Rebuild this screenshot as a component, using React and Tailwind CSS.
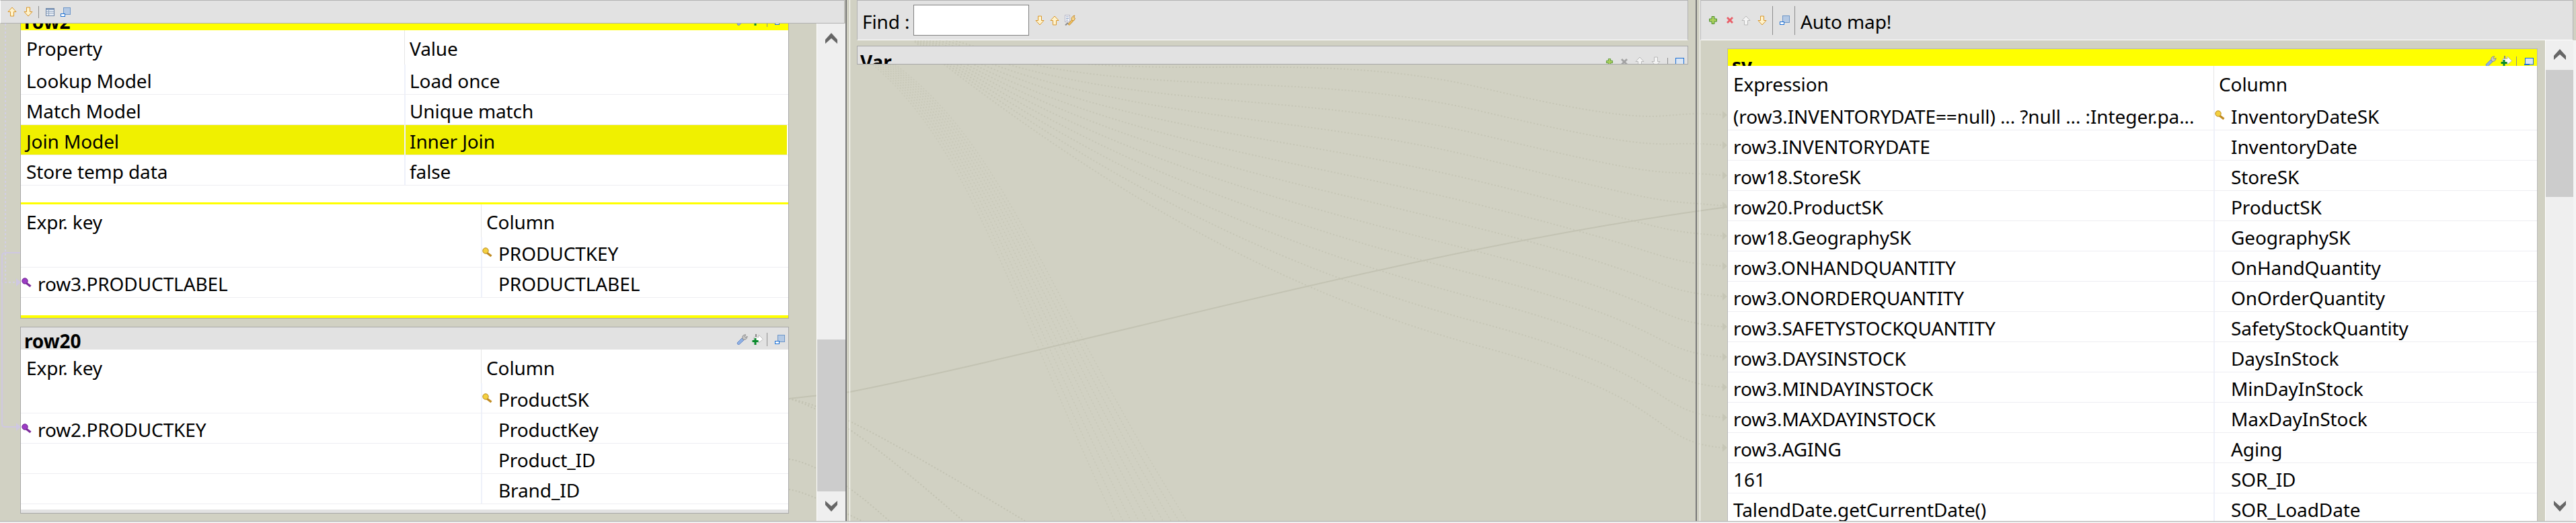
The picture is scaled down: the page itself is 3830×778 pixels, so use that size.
const ArrowUp = ({ off }) => (
  <svg width="14" height="15" viewBox="0 0 14 15" className="shrink-0">
    <path d="M7 1 L13 7.5 H9.5 V14 H4.5 V7.5 H1 Z" fill={off ? '#f4f4f4' : '#fff3cc'} stroke={off ? '#b9b9b9' : '#d9962a'} />
  </svg>
);

const ArrowDown = ({ off }) => (
  <svg width="14" height="15" viewBox="0 0 14 15" className="shrink-0">
    <path d="M7 14 L13 7.5 H9.5 V1 H4.5 V7.5 H1 Z" fill={off ? '#f4f4f4' : '#fff3cc'} stroke={off ? '#b9b9b9' : '#d9962a'} />
  </svg>
);

const WindowIcon = () => (
  <svg width="15" height="14" viewBox="0 0 15 14" className="shrink-0">
    <rect x="4.5" y="0.5" width="10" height="10" fill="#b4c9e4" stroke="#6f97c8" />
    <rect x="0.5" y="9.5" width="6" height="4" fill="#fff" stroke="#1a6fd4" />
  </svg>
);

const MaxIcon = () => (
  <svg width="14" height="11" viewBox="0 0 14 11" className="shrink-0">
    <rect x="1.5" y="0.5" width="12" height="9.5" fill="#dbe6f4" stroke="#1a6fd4" />
    <rect x="0" y="9" width="8" height="2" fill="#1a6fd4" />
  </svg>
);

const TableIcon = () => (
  <svg width="13" height="12" viewBox="0 0 13 12" className="shrink-0">
    <rect x="0.5" y="0.5" width="12" height="11" fill="#eef2f8" stroke="#6d85a6" />
    <rect x="1" y="1" width="11" height="2" fill="#8ba3c4" />
    <path d="M1 5.5 H12 M1 8 H12 M4.5 3 V11" stroke="#8fa3bd" />
  </svg>
);

const PlusIcon = ({ small }) => (
  <svg width="12" height={small ? 10 : 12} viewBox="0 0 12 12" className="shrink-0">
    <path d="M4 0.5 H8 V4 H11.5 V8 H8 V11.5 H4 V8 H0.5 V4 H4 Z" fill="#a9cf5c" stroke="#4f9130" />
  </svg>
);

const CrossIcon = ({ off }) => (
  <svg width="12" height="12" viewBox="0 0 12 12" className="shrink-0">
    <path d="M1 3 L3 1 L6 4 L9 1 L11 3 L8 6 L11 9 L9 11 L6 8 L3 11 L1 9 L4 6 Z" fill={off ? '#a3a3a3' : '#e9606a'} />
  </svg>
);

const WrenchIcon = () => (
  <svg width="17" height="16" viewBox="0 0 17 16" className="shrink-0">
    <path d="M1 13 L8 6 L11 9 L4 15.5 Q1 16 1 13 Z" fill="#8fb0e4" stroke="#6f8fc8" />
    <path d="M9 7 Q8 2 12 1 L14 1 L12 3.5 L14 5 L16 3 Q16 8 11 8.5 Z" fill="#c8c8c8" stroke="#8a8a8a" />
  </svg>
);

const ArrowPlusIcon = () => (
  <svg width="17" height="16" viewBox="0 0 17 16" className="shrink-0">
    <rect x="5" y="0" width="2" height="6" fill="#888" />
    <path d="M3 4.5 H10 V1 L16.5 7.5 L10 13 V10 H3 Z" fill="#fff" stroke="#bbb" />
    <path d="M3.5 6 H6.5 V9 H9.5 V12 H6.5 V16 H3.5 V12 H0.5 V9 H3.5 Z" fill="#0a8a2c" />
  </svg>
);

const FindIcon = () => (
  <svg width="16" height="16" viewBox="0 0 16 16" className="shrink-0">
    <rect x="0.5" y="0.5" width="7" height="10" fill="#f4f4f4" stroke="#b8b8c8" />
    <path d="M2 3 H6 M2 5.5 H6 M2 8 H5" stroke="#8aa0c8" />
    <path d="M5 14 L11 7 L13 9 L7 15.5 Z" fill="#f0c060" stroke="#c89030" />
    <path d="M10 7 Q10 2 15 1 L13.5 4 L15.5 5 Q15 9 12 9 Z" fill="#f6d690" stroke="#c89030" />
    <path d="M1 15.5 L5 12" stroke="#888" strokeWidth="2" />
  </svg>
);

const KeyIcon = ({ purple }) => (
  <svg width="15" height="15" viewBox="0 0 15 15" className="shrink-0 -mt-[4px]">
    <path d="M7 8 L13.5 13" stroke={purple ? '#7c2a9c' : '#c08a20'} strokeWidth="3.4" />
    <circle cx="5" cy="5" r="4.2" fill={purple ? '#9c3cc4' : '#f4d040'} stroke={purple ? '#6c2390' : '#b88a20'} />
  </svg>
);

const Chevron = ({ down }) => (
  <svg width="18" height="16" viewBox="0 0 18 16" className={down ? 'rotate-180 shrink-0' : 'shrink-0'}>
    <path d="M9 0 L18 10 V16 L9 8 L0 16 V10 Z" fill="#666666" />
  </svg>
);

const Sep = ({ className }) => <div className={`w-px bg-[#8e8e8e] shrink-0 ${className}`} />;

const Text = ({ children, className = '' }) => (
  <span className={`whitespace-nowrap text-black ${className}`}>{children}</span>
);

// one table row, widths come from the parent table
const Row = ({ left, right, leftW, leftKey, rightKey, selected }) => (
  <div className="flex h-[45px] shrink-0 border-b border-[#eeeef2] pr-[2px]">
    <div className={`${leftW} shrink-0 flex items-center pt-[4px] ${selected ? 'bg-[#f0f000]' : ''} ${leftKey ? 'pl-[1px]' : 'pl-2'}`}>
      {leftKey && <KeyIcon purple />}
      <Text className={leftKey ? 'ml-[9px]' : ''}>{left}</Text>
    </div>
    <div className="w-[2px] shrink-0 bg-[#eef1fa]" />
    <div className={`flex-1 flex items-center pt-[4px] ${selected ? 'bg-[#f0f000]' : ''} ${rightKey ? 'pl-[0px]' : right && leftKey !== undefined ? 'pl-[24px]' : 'pl-[6px]'}`}>
      {rightKey && <KeyIcon />}
      <Text className={rightKey ? 'ml-[9px]' : ''}>{right}</Text>
    </div>
  </div>
);

const Head = ({ left, right, leftW, className = '' }) => (
  <div className={`flex shrink-0 ${className}`}>
    <div className={`${leftW} shrink-0 flex items-center pl-2 pt-[3px]`}>
      <Text>{left}</Text>
    </div>
    <div className="w-px shrink-0 bg-[#e6e6e6]" />
    <div className="flex-1 flex items-center pl-[7px] pt-[3px]">
      <Text>{right}</Text>
    </div>
  </div>
);

const TableActions = () => (
  <div className="flex items-center mt-[3px]">
    <WrenchIcon />
    <div className="ml-[6px]"><ArrowPlusIcon /></div>
    <Sep className="h-[20px] ml-[5px]" />
    <div className="ml-[11px]"><WindowIcon /></div>
  </div>
);

const rightRows = [
  ['(row3.INVENTORYDATE==null) ... ?null ... :Integer.pa...', 'InventoryDateSK', true],
  ['row3.INVENTORYDATE', 'InventoryDate'],
  ['row18.StoreSK', 'StoreSK'],
  ['row20.ProductSK', 'ProductSK'],
  ['row18.GeographySK', 'GeographySK'],
  ['row3.ONHANDQUANTITY', 'OnHandQuantity'],
  ['row3.ONORDERQUANTITY', 'OnOrderQuantity'],
  ['row3.SAFETYSTOCKQUANTITY', 'SafetyStockQuantity'],
  ['row3.DAYSINSTOCK', 'DaysInStock'],
  ['row3.MINDAYINSTOCK', 'MinDayInStock'],
  ['row3.MAXDAYINSTOCK', 'MaxDayInStock'],
  ['row3.AGING', 'Aging'],
  ['161', 'SOR_ID'],
  ['TalendDate.getCurrentDate()', 'SOR_LoadDate'],
];

// mapping links that run behind the panels
const Links = () => {
  const targets = Array.from({ length: 12 }, (_, k) => 171 + 45 * k);
  return (
    <svg width="3830" height="778" className="absolute inset-0" fill="none">
      {targets.map((y, k) => (
        <g key={y}>
          <path
            d={`M1360 ${40 + k * 2} C1640 ${150 + k * 12}, 1900 ${60 + 34 * k}, 2200 ${130 + 35 * k} S2450 ${y - 10}, 2561 ${y}`}
            stroke="#c6c6b6"
            strokeWidth="2"
            strokeDasharray="2 3"
          />
          <path d={`M2561 ${y - 6} L2568 ${y} L2561 ${y + 6} Z`} fill="#c6c6b6" />
        </g>
      ))}
      {[0, 6, 12, 18, 24, 30, 36, 42, 48, 54].map((d) => (
        <path
          key={d}
          d={`M${1290 + d * 0.6} 90 C${1440 + d} 210, ${1500 + d} 440, ${1660 + d * 2} 780`}
          stroke="#c8c8b8"
          strokeWidth="1.5"
          strokeDasharray="2 3"
        />
      ))}
      <path d="M1173 593 C1214 601, 1264 618, 1524 775" stroke="#c2c2b2" strokeWidth="2" strokeDasharray="2 3" />
      <path d="M1173 593 C1214 605, 1270 632, 1432 775" stroke="#c2c2b2" strokeWidth="2" strokeDasharray="2 3" />
      <path d="M1173 683 C1214 690, 1264 722, 1322 775" stroke="#c2c2b2" strokeWidth="2" strokeDasharray="2 3" />
      <path d="M1173 728 C1214 735, 1264 770, 1290 778" stroke="#c2c2b2" strokeWidth="2" strokeDasharray="2 3" />
      <path d="M1173 593 L1264 583 C1640 507, 2100 370, 2568 308" stroke="#c3c3b3" strokeWidth="2" />
      {/* join links in the left gutter */}
      <path d="M8 35 V420 H24" stroke="#d2cfe6" strokeWidth="2" strokeDasharray="3 3" />
      <path d="M30 376 H8 Q3 376 3 381 V630 Q3 635 8 635 H24" stroke="#cfc8e2" strokeWidth="2" />
      <path d="M24 414 L31 420 L24 426 Z" fill="#cfc8e2" />
      <path d="M24 629 L31 635 L24 641 Z" fill="#cfc8e2" />
    </svg>
  );
};

export default function App() {
  return (
    <div className="relative w-[3830px] h-[778px] overflow-hidden bg-[#d1d1c3] font-['Noto_Sans',sans-serif] text-[28px] leading-none tracking-[-0.1px]">
      <Links />
      <div className="relative flex flex-col h-full">
        <div className="flex h-[775px]">
          {/* left column */}
          <div className="w-[1257px] shrink-0 flex flex-col">
            <div className="h-[35px] shrink-0 flex items-center bg-[#e2e2e2] border border-[#b2b2b2] border-l-white mr-px pl-[10px]">
              <ArrowUp />
              <div className="ml-[10px]"><ArrowDown /></div>
              <Sep className="h-[18px] ml-[8px]" />
              <div className="ml-[10px]"><TableIcon /></div>
              <div className="ml-[9px]"><WindowIcon /></div>
            </div>
            <div className="flex flex-1 min-h-0">
              <div className="w-[30px] shrink-0" />
              <div className="w-[1143px] shrink-0 flex flex-col">
                <div className="h-[439px] shrink-0 flex flex-col bg-white border-x border-b border-[#a8a8a8]">
                  <div className="h-[10px] shrink-0 overflow-hidden bg-[#ffff00] flex flex-col justify-end">
                    <div className="h-[33px] shrink-0 flex items-center justify-between pl-[5px] pr-[5px]">
                      <Text className="font-bold mt-[7px]">row2</Text>
                      <TableActions />
                    </div>
                  </div>
                  <Head left="Property" right="Value" leftW="w-[570px]" className="h-[51px]" />
                  <Row leftW="w-[570px]" left="Lookup Model" right="Load once" />
                  <Row leftW="w-[570px]" left="Match Model" right="Unique match" />
                  <Row leftW="w-[570px]" left="Join Model" right="Inner Join" selected />
                  <Row leftW="w-[570px]" left="Store temp data" right="false" />
                  <div className="h-[25px] shrink-0" />
                  <div className="h-[3px] shrink-0 bg-[#ffff00]" />
                  <Head left="Expr. key" right="Column" leftW="w-[684px]" className="h-[49px]" />
                  <Row leftW="w-[684px]" left="" right="PRODUCTKEY" rightKey />
                  <Row leftW="w-[684px]" left="row3.PRODUCTLABEL" right="PRODUCTLABEL" leftKey />
                  <div className="h-[26px] shrink-0" />
                  <div className="h-[4px] shrink-0 bg-[#ffff00]" />
                </div>
                <div className="h-[278px] shrink-0 mt-[12px] flex flex-col bg-white border border-[#a8a8a8]">
                  <div className="h-[33px] shrink-0 flex items-center justify-between bg-[#e2e2e2] pl-[5px] pr-[5px]">
                    <Text className="font-bold mt-[7px]">row20</Text>
                    <TableActions />
                  </div>
                  <Head left="Expr. key" right="Column" leftW="w-[684px]" className="h-[50px]" />
                  <Row leftW="w-[684px]" left="" right="ProductSK" rightKey />
                  <Row leftW="w-[684px]" left="row2.PRODUCTKEY" right="ProductKey" leftKey />
                  <Row leftW="w-[684px]" left="" right="Product_ID" leftKey={false} />
                  <Row leftW="w-[684px]" left="" right="Brand_ID" leftKey={false} />
                  <div className="h-[8px] shrink-0" />
                  <div className="h-[5px] shrink-0 bg-[#e2e2e2]" />
                </div>
              </div>
              <div className="w-[41px] shrink-0" />
              <div className="w-[43px] shrink-0 flex flex-col items-center bg-[#efefef] border-l border-white pt-[14px] pb-[14px]">
                <Chevron />
                <div className="w-full h-[226px] shrink-0 bg-[#cccccc] mt-[440px]" />
                <div className="mt-auto"><Chevron down /></div>
              </div>
            </div>
          </div>
          {/* sash */}
          <div className="w-[7px] shrink-0 flex">
            <div className="w-[2px] bg-[#777777]" />
            <div className="flex-1" />
            <div className="w-px bg-white" />
          </div>
          {/* middle column */}
          <div className="w-[1257px] shrink-0 flex flex-col pl-[10px] pr-[11px]">
            <div className="h-[60px] shrink-0 flex items-center bg-[#e2e2e2] border border-[#b2b2b2] border-b-white pl-[7px]">
              <Text className="w-[76px] mt-[3px]">Find :</Text>
              <div className="w-[172px] h-[46px] bg-white border border-[#808080]" />
              <div className="ml-[9px] flex items-center gap-[8px]">
                <ArrowDown />
                <ArrowUp />
                <FindIcon />
              </div>
            </div>
            <div className="h-[28px] shrink-0 mt-[8px] overflow-hidden flex items-start justify-between bg-[#e2e2e2] border border-[#a8a8a8] pl-[4px] pr-[5px]">
              <Text className="font-bold mt-[9px]">Var</Text>
              <div className="flex items-center gap-[10px] mt-[15px]">
                <PlusIcon small />
                <CrossIcon off />
                <ArrowUp off />
                <ArrowDown off />
                <Sep className="h-[12px]" />
                <MaxIcon />
              </div>
            </div>
          </div>
          {/* sash */}
          <div className="w-[7px] shrink-0 flex">
            <div className="w-[2px] bg-[#777777]" />
            <div className="flex-1" />
            <div className="w-px bg-white" />
          </div>
          {/* right column */}
          <div className="flex-1 min-w-0 flex flex-col">
            <div className="h-[60px] shrink-0 flex items-start bg-[#e2e2e2] border border-[#b2b2b2] border-b-white mr-[4px] pl-[12px]">
              <div className="mt-[23px]"><PlusIcon /></div>
              <div className="mt-[23px] ml-[13px]"><CrossIcon /></div>
              <div className="mt-[22px] ml-[11px]"><ArrowUp off /></div>
              <div className="mt-[22px] ml-[10px]"><ArrowDown /></div>
              <Sep className="h-[43px] mt-[8px] ml-[8px]" />
              <div className="mt-[22px] ml-[10px]"><WindowIcon /></div>
              <Sep className="h-[43px] mt-[8px] ml-[7px]" />
              <Text className="ml-[8px] mt-[17px]">Auto map!</Text>
            </div>
            <div className="flex flex-1 min-h-0">
              <div className="w-[40px] shrink-0" />
              <div className="w-[1205px] shrink-0 mt-[12px] overflow-hidden flex flex-col bg-white border-x border-t border-[#b8b8b8]">
                <div className="h-[25px] shrink-0 overflow-hidden flex items-start justify-between bg-[#ffff00] pl-[6px] pr-[5px]">
                  <Text className="font-bold mt-[10px]">sv</Text>
                  <div className="flex items-center mt-[10px]">
                    <WrenchIcon />
                    <div className="ml-[6px]"><ArrowPlusIcon /></div>
                    <Sep className="h-[15px] ml-[6px]" />
                    <div className="ml-[11px]"><MaxIcon /></div>
                  </div>
                </div>
                <Head left="Expression" right="Column" leftW="w-[722px]" className="h-[51px]" />
                {rightRows.map(([expr, col, key]) => (
                  <Row key={col} leftW="w-[722px]" left={expr} right={col} rightKey={key} leftKey={false} />
                ))}
              </div>
              <div className="w-[11px] shrink-0" />
              <div className="w-[42px] shrink-0 flex flex-col items-center bg-[#efefef] border-l border-white pt-[13px] pb-[14px]">
                <Chevron />
                <div className="w-full h-[189px] shrink-0 bg-[#cccccc] mt-[15px]" />
                <div className="mt-auto"><Chevron down /></div>
              </div>
              <div className="flex-1 bg-[#f4f4f4]" />
            </div>
          </div>
        </div>
        <div className="h-[3px] shrink-0 bg-[#f0f0f0] border-t border-[#b0b0b0]" />
      </div>
    </div>
  );
}
